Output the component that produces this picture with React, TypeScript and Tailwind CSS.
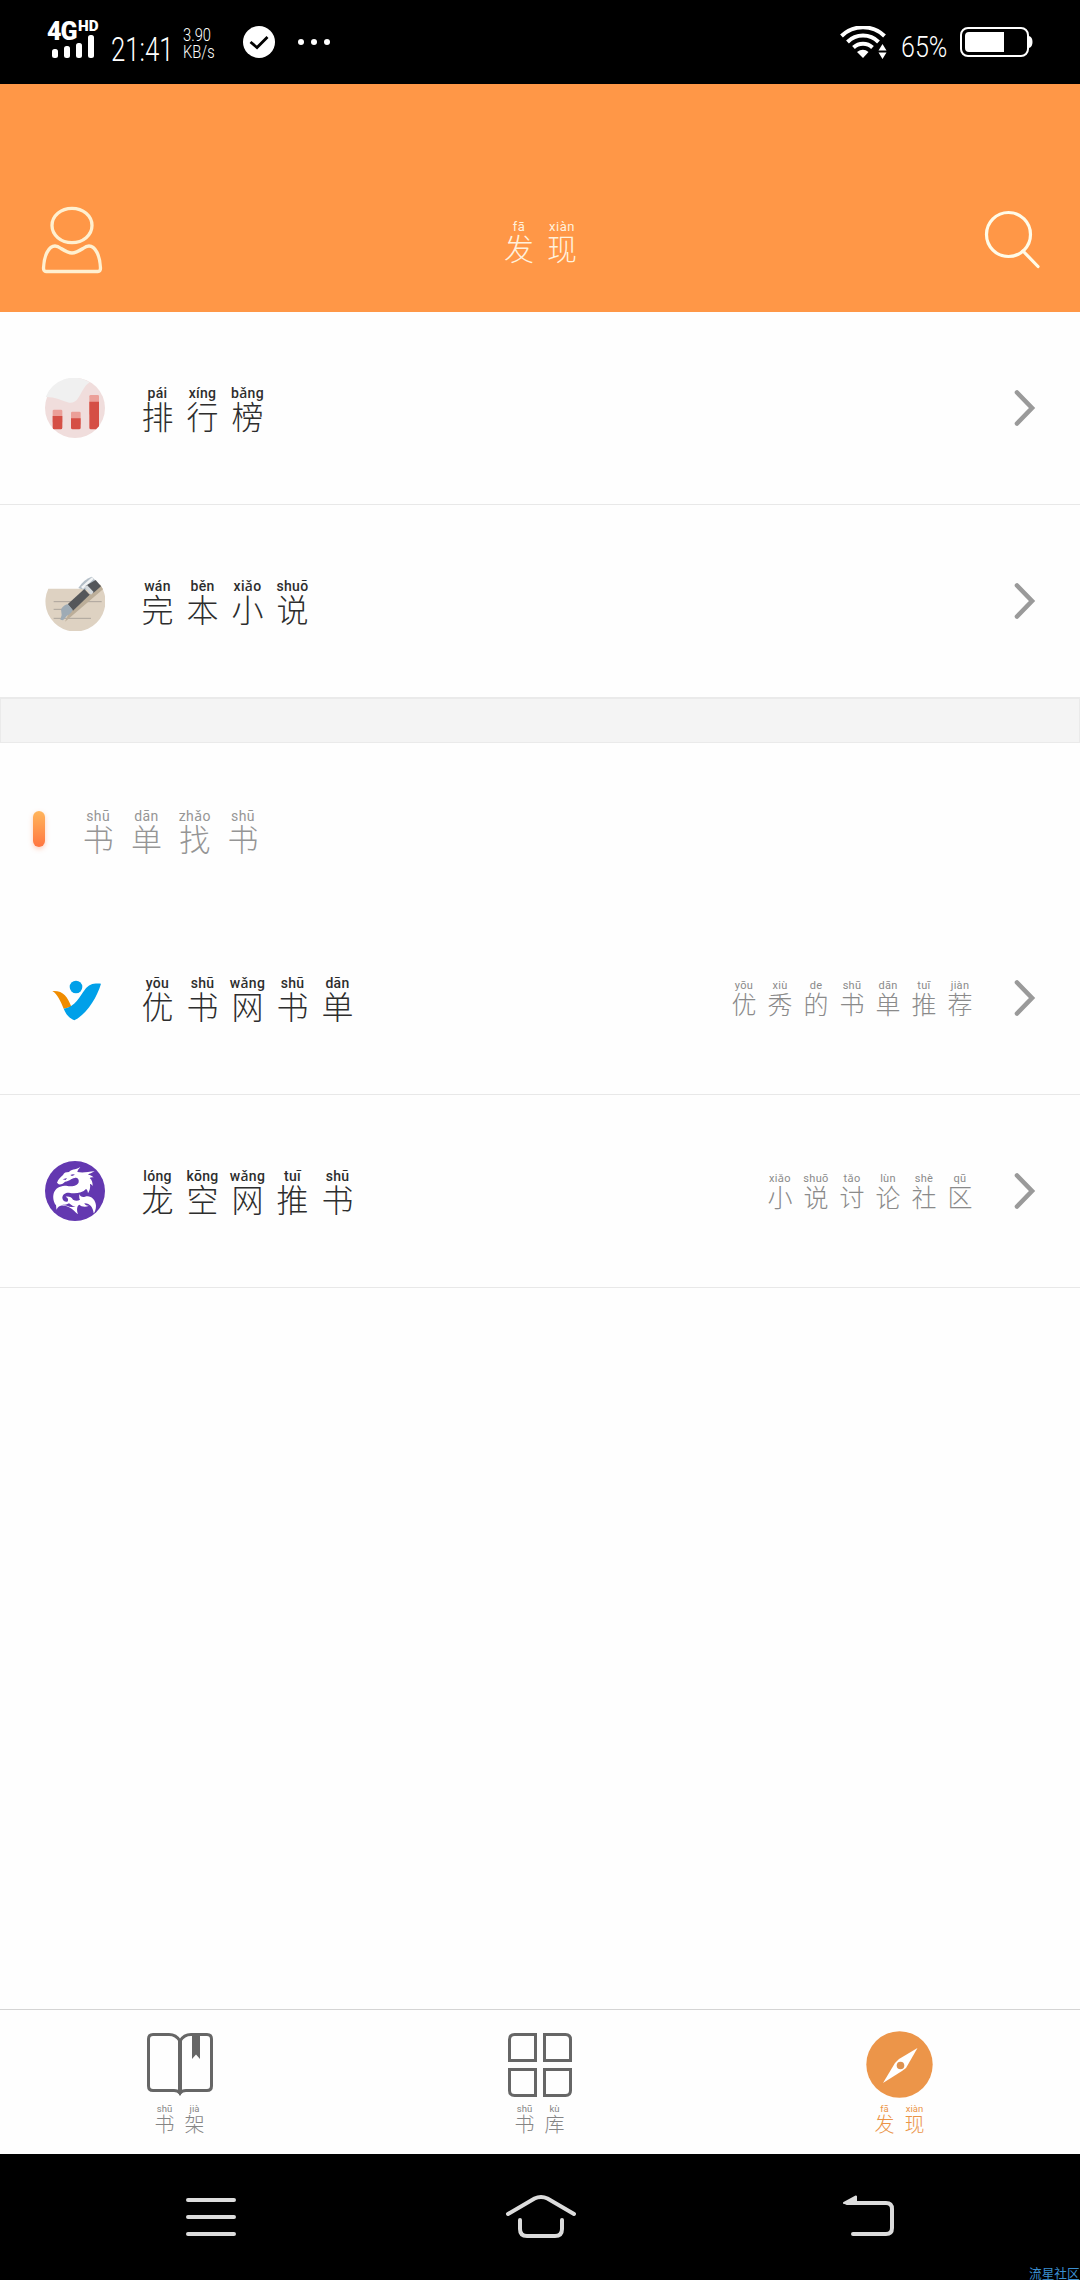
import type { ReactNode } from "react";

type Syllable = [pinyin: string, hanzi: string];

type RubySize = "title" | "item" | "section" | "hint" | "tab";

const rubySizes: Record<RubySize, { cell: string; pinyin: string; hanzi: string }> = {
  title: { cell: "w-[43px]", pinyin: "h-[15px] text-[13px] leading-[15px] tracking-[0.5px]", hanzi: "-mt-[3px] mb-[3px] text-[30px] leading-[32px]" },
  item: { cell: "w-[45px]", pinyin: "h-[16px] text-[14px] leading-[16px] tracking-[0.3px] font-medium", hanzi: "-mt-[2px] mb-[2px] text-[32px] leading-[32px]" },
  section: { cell: "w-[48.3px]", pinyin: "h-[16px] text-[14px] leading-[16px] tracking-[0.4px]", hanzi: "-mt-[3px] mb-[3px] text-[31px] leading-[34px]" },
  hint: { cell: "w-[36px]", pinyin: "h-[12px] text-[11px] leading-[12px] tracking-[0.3px]", hanzi: "-mt-[2px] mb-[2px] text-[25px] leading-[26px]" },
  tab: { cell: "w-[30px]", pinyin: "h-[11px] text-[9.500px] leading-[11px]", hanzi: "-mt-[1px] mb-[1px] text-[20px] leading-[21px]" },
};

function Ruby({ text, size }: { text: Syllable[]; size: RubySize }) {
  const s = rubySizes[size];
  return (
    <div className="flex">
      {text.map(([pinyin, hanzi], i) => (
        <div key={i} className={`flex flex-col items-center whitespace-nowrap ${s.cell}`}>
          <span className={`font-['Roboto','Noto_Sans',sans-serif] ${s.pinyin}`}>{pinyin}</span>
          <span className={`font-['Noto_Sans_CJK_SC',sans-serif] font-light ${s.hanzi}`}>{hanzi}</span>
        </div>
      ))}
    </div>
  );
}

function StatusBar() {
  return (
    <div className="flex h-[84px] shrink-0 items-start bg-black pt-[22px] font-['Roboto',sans-serif] text-white">
      <div className="ml-[47px] flex w-[53px] flex-col">
        <div className="flex h-[20px] items-start">
          <span className="w-[31px] origin-left text-[25px] leading-[20px] font-black tracking-[-1px]">4G</span>
          <span className="-mt-[1px] origin-left scale-x-[1.05] text-[14.500px] leading-[12px] font-black">HD</span>
        </div>
        <svg className="-mt-[8px] ml-[5px]" width="43" height="25" viewBox="0 0 43 25" fill="white">
          <rect x="0" y="15" width="6" height="9" rx="2.5" />
          <rect x="12" y="12" width="6" height="12" rx="2.5" />
          <rect x="24" y="9" width="6" height="15" rx="2.5" />
          <rect x="36" y="1" width="6" height="23" rx="2.5" />
        </svg>
      </div>
      <span className="mt-[11px] ml-[11px] w-[60px] origin-left scale-x-[0.77] text-[33.500px] leading-[33px] font-light whitespace-nowrap">21:41</span>
      <div className="ml-[12px] flex w-[32px] flex-col pt-[5px] whitespace-nowrap">
        <span className="origin-left scale-x-[0.84] text-[17.500px] leading-[17px] font-light">3.90</span>
        <span className="origin-left scale-x-[0.84] text-[17.500px] leading-[17px] font-light">KB/s</span>
      </div>
      <svg className="mt-[4px] ml-[28px]" width="32" height="32" viewBox="0 0 32 32">
        <circle cx="16" cy="16" r="16" fill="white" />
        <path d="M7.500 16 L14 21.5 L24.500 11" fill="none" stroke="black" strokeWidth="2.8" />
      </svg>
      <div className="mt-[17px] ml-[23px] flex gap-[7px]">
        <i className="size-[6px] rounded-full bg-white" />
        <i className="size-[6px] rounded-full bg-white" />
        <i className="size-[6px] rounded-full bg-white" />
      </div>
      <svg className="mt-[4px] ml-auto" width="47" height="33" viewBox="0 0 47 33">
        <g fill="none" stroke="white" strokeWidth="4">
          <path d="M1.5 10 A31 31 0 0 1 44.5 10" />
          <path d="M7.5 16 A22 22 0 0 1 38.500 16" />
          <path d="M13.500 21.500 A14 14 0 0 1 32.500 21.500" />
        </g>
        <path d="M17 26 Q23 21.500 28.500 26 L23 32 Z" fill="white" />
        <path d="M38.500 24.500 L42.500 18 L46.500 24.500 Z M38.500 26.500 L46.500 26.500 L42.500 33 Z" fill="white" />
      </svg>
      <span className="mt-[10px] ml-[14px] w-[47px] origin-left scale-x-[0.85] text-[29.500px] leading-[31px] font-light whitespace-nowrap">65%</span>
      <svg className="mt-[5px] mr-[47px] ml-[12px]" width="73" height="30" viewBox="0 0 73 30">
        <rect x="1" y="1" width="67" height="28" rx="7" fill="none" stroke="white" strokeWidth="2" />
        <path d="M9 5 H44 V25 H9 Q5 25 5 21 V9 Q5 5 9 5Z M69 9 Q72.500 10 72.500 15 Q72.500 20 69 21Z" fill="white" />
      </svg>
    </div>
  );
}

function Header() {
  return (
    <header className="flex h-[228px] shrink-0 items-start justify-between bg-[#ff9747] pt-[121px] pr-[38px] pl-[41px] text-[#fff1dc]">
      <svg width="62" height="70" viewBox="0 0 62 70" fill="none" stroke="#fff0d0" strokeWidth="3.3" strokeLinejoin="round">
        <ellipse cx="31" cy="20.500" rx="20" ry="17.200" />
        <path d="M14 41 C16 41 18 42 20 43.500 C24 46 28 48 31 48 C34 48 38 46 42 43.500 C44 42 46 41 48 41 C54 41 59 50 59.500 63 Q59.500 66.500 57 66.500 H5 Q2.500 66.500 2.500 63 C3 50 8 41 14 41Z" />
      </svg>
      <div className="pt-[14px] pr-[6px]">
        <Ruby size="title" text={[["fā", "发"], ["xiàn", "现"]]} />
      </div>
      <svg className="mt-[4px]" width="58" height="62" viewBox="0 0 58 62" fill="none" stroke="#fffbe8" strokeWidth="3.2">
        <circle cx="24.500" cy="25.500" r="22" />
        <path d="M39 42 L54 57.500" strokeLinecap="round" />
      </svg>
    </header>
  );
}

function RankIcon() {
  return (
    <svg width="60" height="60" viewBox="0 0 180 180">
      <circle cx="90" cy="90" r="90" fill="#f0dddc" />
      <path d="M2 57 C32 57 50 68 72 74 C105 80 105 32 134 13 A90 90 0 0 0 2 57Z" fill="#f0f0f0" />
      <g fill="#eb9f98">
        <rect x="23" y="95" width="29" height="40" rx="4" />
        <rect x="78" y="101" width="29" height="40" rx="4" />
        <rect x="133" y="51" width="29" height="60" rx="4" />
      </g>
      <path d="M23 114 H52 V149 Q52 154 47 154 H28 Q23 154 23 149Z M78 121 H107 V149 Q107 154 102 154 H83 Q78 154 78 149Z M133 71 H162 V145 L153 154 H138 Q133 154 133 149Z" fill="#d54f45" />
    </svg>
  );
}

function PenIcon() {
  return (
    <svg width="60" height="60" viewBox="0 0 180 180">
      <path d="M10 53 H102 L165 40 A90 90 0 1 1 10 53Z" fill="#ded2c2" />
      <path d="M26 92 H170 M26 115 H84 M26 142 H138" stroke="#a19b94" strokeWidth="2.500" />
      <path d="M60 152 L174 55 L166 42 L74 120Z" fill="#bcae99" />
      <path d="M100 51 Q116 25 140 17 L151 28 L122 58Z" fill="#b4bfc8" />
      <path d="M108 48 L141 19 L146 24 L114 54Z" fill="#f2f4f5" />
      <path d="M122 44 L152 27 L168 46 L145 66Z" fill="#53565a" />
      <path d="M119 48 L126 42 L146 63 L138 71Z" fill="#d5dadd" />
      <path d="M68 100 L118 54 L134 71 L84 119Z" fill="#55575a" />
      <path d="M48 115 Q58 100 69 100 L83 116 Q80 127 66 134 L54 148 L46 146 L50 132Z" fill="#9eabb5" />
    </svg>
  );
}

function YoushuIcon() {
  return (
    <svg width="60" height="60" viewBox="135 84 180 180">
      <path d="M157 153 C190 151 202 170 214 200 L191 206 C182 184 172 162 157 153Z" fill="#f08c00" />
      <path d="M191 206 C225 202 241 167 254 150 C268 131 281 130 303 131 C290 175 259 223 223 241 C210 236 198 224 191 206Z" fill="#00a0e9" />
      <circle cx="228" cy="141" r="19" fill="#00a0e9" />
    </svg>
  );
}

function DragonIcon() {
  return (
    <svg width="60" height="60" viewBox="135 663 180 180">
      <circle cx="225" cy="753" r="90" fill="#6338b0" />
      <path
        fill="white"
        d="M171 728 C174 718 183 711 189 705 C192 698 198 696 207 696 C212 688 226 690 241 681 C236 687 233 691 232 696 C248 699 263 696 284 694 C276 699 268 701 264 704 C272 705 277 708 281 712 C275 711 271 712 269 714 C276 720 278 728 278 738 C275 734 272 732 270 732 C272 742 269 752 264 760 C263 751 261 749 258 747 C247 759 225 762 207 758 C195 757 187 764 187 774 C188 782 194 786 202 785 C207 780 204 773 197 770 C207 768 215 772 219 779 C227 784 234 783 240 779 C236 773 239 768 237 762 C241 769 247 773 255 770 C270 764 287 777 288 797 C288 807 285 816 281 820 C279 802 269 789 253 790 C255 795 260 798 267 797 C255 803 243 799 238 794 C231 798 229 808 234 823 C225 816 222 811 215 806 C201 797 191 795 182 797 C174 799 170 807 170 810 C168 803 169 799 168 796 C158 782 158 765 163 755 C170 741 185 737 199 737 C212 741 232 740 236 727 C238 718 232 712 224 714 C213 716 208 724 195 725 C191 730 184 734 176 733Z"
      />
      <path d="M188 718 L201 714 L197 720Z M211 705 Q219 701 225 704 L216 708Z" fill="#6338b0" />
      <path d="M186 792 Q196 797 207 790 Q218 800 227 799 Q213 804 201 797 Q193 797 186 792Z" fill="#6338b0" />
    </svg>
  );
}

function Chevron() {
  return (
    <svg className="mr-[44px] shrink-0" width="24" height="40" viewBox="0 0 24 40" fill="none" stroke="#9a9a9a" strokeWidth="4.600" strokeLinecap="round">
      <path d="M5 4.500 L20 20 L5 35.500" />
    </svg>
  );
}

type RowProps = { icon: ReactNode; label: Syllable[]; hint?: Syllable[]; divider?: boolean };

function Row({ icon, label, hint, divider = true }: RowProps) {
  return (
    <div className={`flex shrink-0 items-center pl-[45px] ${divider ? "h-[193px] border-b border-[#e8e8e8]" : "h-[192px]"}`}>
      {icon}
      <div className="ml-[30px] pt-[2px] text-[#2d2d2d]">
        <Ruby size="item" text={label} />
      </div>
      <div className="mr-[34px] ml-auto pt-[1px] text-[#8a8a8a]">{hint && <Ruby size="hint" text={hint} />}</div>
      <Chevron />
    </div>
  );
}

function Tab({ icon, label, active = false }: { icon: ReactNode; label: Syllable[]; active?: boolean }) {
  return (
    <div className={`flex flex-1 flex-col items-center pt-[20px] ${active ? "text-[#eb9447]" : "text-[#858585]"}`}>
      {icon}
      <div className="mt-[5px] pr-px">
        <Ruby size="tab" text={label} />
      </div>
    </div>
  );
}

function TabBar() {
  return (
    <nav className="flex h-[145px] shrink-0 border-t border-[#d4d4d4]">
      <Tab
        label={[["shū", "书"], ["jià", "架"]]}
        icon={
          <svg width="68" height="68" viewBox="0 0 68 68" fill="none" stroke="#666" strokeWidth="3">
            <path d="M34 61.500 V11 C31 6 28 4.500 23 4.500 H7 Q2.500 4.500 2.500 9 V56 Q2.500 60.500 7 60.500 H28 Q32 60.500 34 63 Q36 60.500 40 60.500 H61 Q65.500 60.500 65.500 56 V9 Q65.500 4.500 61 4.500 H45 C40 4.500 37 6 34 11" />
            <path d="M46 4 H54 V29 L50 24.500 L46 29Z" fill="#666" stroke="none" />
            <path d="M31 61 H37 L34 66Z" fill="#666" stroke="none" />
            <path d="M34 10 V62" strokeWidth="4" />
          </svg>
        }
      />
      <Tab
        label={[["shū", "书"], ["kù", "库"]]}
        icon={
          <svg width="68" height="68" viewBox="0 0 68 68" fill="none" stroke="#666" strokeWidth="3">
            <path d="M29.500 4.500 H8.500 Q3.500 4.500 3.500 9.500 V30.500 H29.500Z" />
            <path d="M38.500 4.500 H59.500 Q64.500 4.500 64.500 9.500 V30.500 H38.500Z" />
            <path d="M3.500 39.500 H29.500 V65.500 H8.500 Q3.500 65.500 3.500 60.500Z" />
            <path d="M38.500 39.500 H64.500 V60.500 Q64.500 65.500 59.500 65.500 H38.500Z" />
          </svg>
        }
      />
      <Tab
        active
        label={[["fā", "发"], ["xiàn", "现"]]}
        icon={
          <svg width="68" height="68" viewBox="0 0 68 68">
            <circle cx="33.500" cy="34.500" r="33.200" fill="#ec9549" />
            <path d="M51.500 18 L40 38 L36 41 L17 53 L29 33 L33 29Z" fill="white" />
            <circle cx="34.500" cy="35.500" r="3.800" fill="#dd914f" />
          </svg>
        }
      />
    </nav>
  );
}

function SystemNav() {
  return (
    <div className="relative flex h-[126px] shrink-0 items-start overflow-hidden bg-black pt-[38px]">
      <svg className="ml-[185px]" width="52" height="48" viewBox="0 0 52 48" stroke="#dcdcdc" strokeWidth="4" strokeLinecap="round">
        <path d="M3 8 H49 M3 25 H49 M3 42 H49" />
      </svg>
      <svg className="ml-[268px]" width="72" height="48" viewBox="0 0 72 48" fill="none" stroke="#dcdcdc" strokeWidth="4" strokeLinecap="round">
        <path d="M3 22 L29.500 6.500 Q36 3.500 42.500 6.500 L69 22" />
        <path d="M15 28 V37 Q15 44 22 44 H50 Q57 44 57 37 V28" />
      </svg>
      <svg className="ml-[265px]" width="54" height="48" viewBox="0 0 54 48" fill="none" stroke="#dcdcdc" strokeWidth="4" strokeLinecap="round">
        <path d="M5 11 H44 Q50 11 50 17 V36 Q50 42 44 42 H11" />
        <path d="M2 11 L14 4.500 V12 Z" fill="#dcdcdc" strokeWidth="2" strokeLinejoin="round" />
      </svg>
      <span className="absolute top-[111px] left-[1029px] font-['Noto_Sans_CJK_SC',sans-serif] text-[12.700px] leading-[15px] whitespace-nowrap text-[#3b8fd0]">
        流星社区
      </span>
    </div>
  );
}

export default function App() {
  return (
    <div className="flex h-[2280px] w-[1080px] flex-col overflow-hidden bg-[#fefefe]">
      <StatusBar />
      <Header />
      <main className="flex flex-1 flex-col">
        <Row icon={<RankIcon />} label={[["pái", "排"], ["xíng", "行"], ["bǎng", "榜"]]} />
        <Row icon={<PenIcon />} label={[["wán", "完"], ["běn", "本"], ["xiǎo", "小"], ["shuō", "说"]]} divider={false} />
        <div className="h-[46px] shrink-0 border border-t-2 border-[#eaeaea] bg-[#f4f4f4]" />
        <div className="flex h-[159px] shrink-0 items-start pt-[68px] pl-[33px] text-[#959595]">
          <div className="h-[36px] w-[12px] rounded-full bg-gradient-to-b from-[#ffb55c] to-[#ff7540] shadow-[0_2px_5px_rgba(255,117,64,0.35)]" />
          <div className="-mt-[3px] ml-[29px]">
            <Ruby size="section" text={[["shū", "书"], ["dān", "单"], ["zhǎo", "找"], ["shū", "书"]]} />
          </div>
        </div>
        <Row
          icon={<YoushuIcon />}
          label={[["yōu", "优"], ["shū", "书"], ["wǎng", "网"], ["shū", "书"], ["dān", "单"]]}
          hint={[["yōu", "优"], ["xiù", "秀"], ["de", "的"], ["shū", "书"], ["dān", "单"], ["tuī", "推"], ["jiàn", "荐"]]}
        />
        <Row
          icon={<DragonIcon />}
          label={[["lóng", "龙"], ["kōng", "空"], ["wǎng", "网"], ["tuī", "推"], ["shū", "书"]]}
          hint={[["xiǎo", "小"], ["shuō", "说"], ["tǎo", "讨"], ["lùn", "论"], ["shè", "社"], ["qū", "区"]]}
        />
      </main>
      <TabBar />
      <SystemNav />
    </div>
  );
}
